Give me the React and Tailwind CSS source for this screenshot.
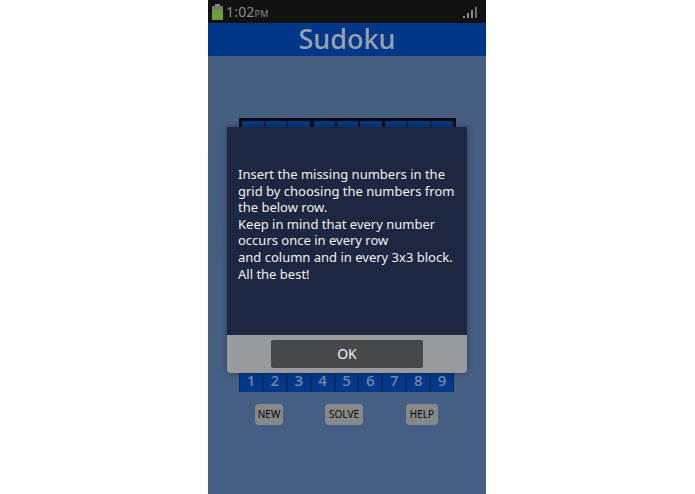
import React from "react";

const font = { fontFamily: '"Noto Sans", sans-serif' };
const cells = Array.from({ length: 9 });

const GridRow = () => (
  <div className="flex gap-[1.5px]">
    {cells.map((_, i) => (
      <div
        key={i}
        className={`h-[22px] w-[22px] bg-[#003783] ${i === 3 || i === 6 ? "ml-[2px]" : ""}`}
      />
    ))}
  </div>
);

const App = () => {
  return (
    <div className="h-[494px] w-[695px] bg-white pl-[208px]" style={font}>
      <div className="relative flex h-full w-[278px] flex-col bg-gradient-to-b from-[#465e7f] to-[#465f85]">
        {/* Status bar */}
        <div className="flex h-[23px] items-center justify-between bg-[#121212] pl-[4px] pr-[9px]">
          <div className="flex items-center gap-[3px]">
            <svg width="11" height="16" viewBox="0 0 11 16">
              <rect x="3" y="0" width="5" height="2" fill="#8a8a8a" />
              <rect x="0" y="2" width="11" height="4" fill="#777" />
              <rect x="0" y="6" width="11" height="10" fill="#6f9c3a" />
            </svg>
            <span className="text-[14px] leading-none tracking-[0.2px] text-[#8b8b8b]">
              1:02<span className="text-[9px]">PM</span>
            </span>
          </div>
          <svg width="14" height="12" viewBox="0 0 14 12">
            <rect x="0" y="10" width="2" height="2" fill="#8a8a8a" />
            <rect x="4" y="7" width="2" height="5" fill="#8a8a8a" />
            <rect x="8" y="4" width="2" height="8" fill="#8a8a8a" />
            <rect x="12" y="1" width="2" height="11" fill="#6e6e6e" />
          </svg>
        </div>

        {/* Title */}
        <div className="flex h-[33px] items-center justify-center bg-[#003789] pb-[2px] text-[27px] font-medium leading-none text-[#98a2b0]">
          Sudoku
        </div>

        {/* Board */}
        <div className="ml-[31px] mt-[62px] flex h-[250px] w-[217px] flex-col gap-[2px] overflow-hidden bg-[#0c0c10] px-[3px] pt-[3px]">
          {cells.map((_, i) => (
            <GridRow key={i} />
          ))}
        </div>

        {/* Number picker */}
        <div className="ml-[31px] flex h-[24px] w-[215px]">
          {cells.map((_, i) => (
            <div
              key={i}
              className="flex flex-1 items-center justify-center border-x border-[#0c2a5c] bg-[#00388a] text-[15px] font-medium text-[#7d8ca6]"
            >
              {i + 1}
            </div>
          ))}
        </div>

        {/* Actions */}
        <div className="mt-[12px] flex items-start text-[10px] text-[#080808]">
          <button className="ml-[47px] h-[21px] w-[28px] rounded-[4px] bg-[#87888a]">NEW</button>
          <button className="ml-[42px] h-[21px] w-[38px] rounded-[4px] bg-[#87888a]">SOLVE</button>
          <button className="ml-[43px] h-[21px] w-[32px] rounded-[4px] bg-[#87888a]">HELP</button>
        </div>

        {/* Help dialog */}
        <div className="absolute left-[19px] top-[127px] flex h-[246px] w-[240px] flex-col overflow-hidden rounded-b-[4px] shadow-[0_0_6px_rgba(20,30,50,0.5)]">
          <div className="flex h-[208px] flex-col justify-start bg-[#1e2741] px-[11px] pt-[39px] text-[13px] leading-[16.6px] text-[#f0f0f0]">
            <p className="whitespace-nowrap">Insert the missing numbers in the</p>
            <p className="whitespace-nowrap">grid by choosing the numbers from</p>
            <p className="whitespace-nowrap">the below row.</p>
            <p className="whitespace-nowrap">Keep in mind that every number</p>
            <p className="whitespace-nowrap">occurs once in every row</p>
            <p className="whitespace-nowrap">and column and in every 3x3 block.</p>
            <p className="whitespace-nowrap">All the best!</p>
          </div>
          <div className="flex flex-1 items-start justify-center bg-[#999a9c] pt-[5px]">
            <button className="h-[28px] w-[152px] rounded-[2px] bg-[#47484c] pb-[2px] text-[14px] text-[#f0f0f0]">OK</button>
          </div>
        </div>
      </div>
    </div>
  );
};

export default App;
